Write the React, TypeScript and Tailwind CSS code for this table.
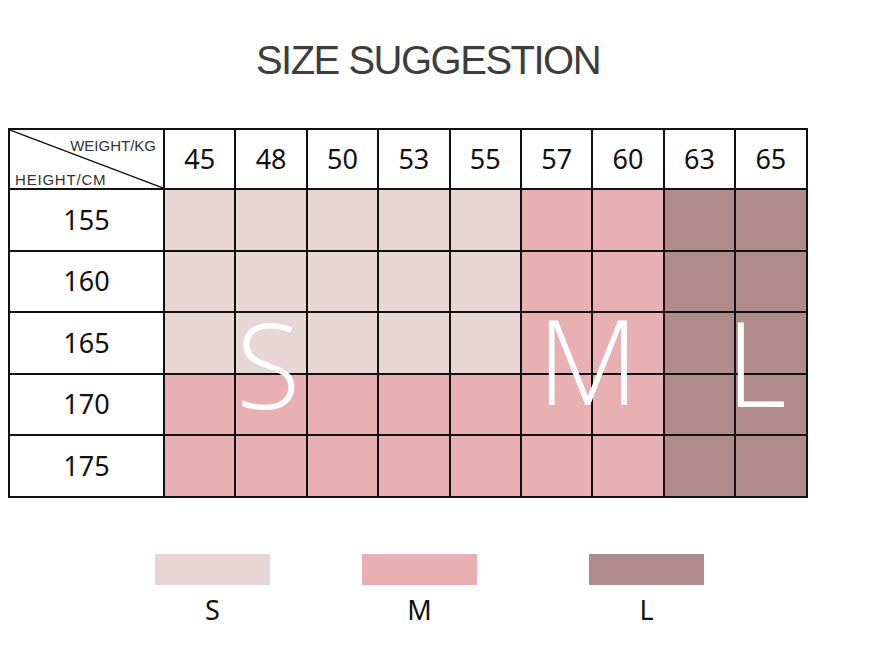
import React from "react";

const weights = ["45", "48", "50", "53", "55", "57", "60", "63", "65"];
const heights = ["155", "160", "165", "170", "175"];

const S = "bg-[#e8d5d6]";
const M = "bg-[#e8b0b3]";
const L = "bg-[#b08b8b]";

function cellColor(row: number, col: number): string {
  if (col >= 7) return L;
  if (col >= 5) return M;
  if (row <= 2) return S;
  return M;
}

export default function App() {
  return (
    <div className="w-[882px] h-[648px] bg-white relative overflow-hidden" style={{ fontFamily: '"Noto Sans", "Liberation Sans", sans-serif' }}>
      <div
        className="pt-[40px] pr-[26px] text-center text-[40px] leading-none tracking-[-1.5px] text-[#3d3d3d] h-[80px]"
        style={{ fontFamily: '"Liberation Sans", Arial, sans-serif' }}
      >
        SIZE SUGGESTION
      </div>

      <div className="relative ml-[8px] mt-[48px] w-[800px]">
        <div className="grid grid-cols-[155px_repeat(9,71.4px)] grid-rows-[60px_repeat(5,61.6px)] border-t-2 border-l-2 border-[#111]">
          <div className="relative border-r-2 border-b-2 border-[#111] bg-white">
            <svg className="absolute inset-0 w-full h-full" preserveAspectRatio="none" viewBox="0 0 100 100">
              <line x1="0" y1="0" x2="100" y2="100" stroke="#111" strokeWidth="1.3" vectorEffect="non-scaling-stroke" />
            </svg>
            <span
              className="absolute right-[7px] top-[8px] text-[15px] leading-none text-[#333]"
              style={{ fontFamily: '"Liberation Sans", Arial, sans-serif' }}
            >
              WEIGHT/KG
            </span>
            <span
              className="absolute left-[5px] bottom-[1px] text-[15px] leading-none tracking-[0.8px] text-[#333]"
              style={{ fontFamily: '"Liberation Sans", Arial, sans-serif' }}
            >
              HEIGHT/CM
            </span>
          </div>
          {weights.map((w) => (
            <div key={w} className="flex items-center justify-center border-r-2 border-b-2 border-[#111] bg-white text-[27px] text-[#111]">
              {w}
            </div>
          ))}
          {heights.map((h, r) => (
            <React.Fragment key={h}>
              <div className="flex items-center justify-center border-r-2 border-b-2 border-[#111] bg-white text-[27px] text-[#111]">
                {h}
              </div>
              {weights.map((w, c) => (
                <div key={w} className={`border-r-2 border-b-2 border-[#111] ${cellColor(r, c)}`} />
              ))}
            </React.Fragment>
          ))}
        </div>

        <span
          className="absolute left-[228px] top-[177px] text-[118px] leading-none font-light text-white"
          style={{ fontFamily: '"Open Sans", "Noto Sans", sans-serif' }}
        >
          S
        </span>
        <span
          className="absolute left-[529px] top-[173px] text-[118px] leading-none font-light text-white"
          style={{ fontFamily: '"Open Sans", "Noto Sans", sans-serif' }}
        >
          M
        </span>
        <span
          className="absolute left-[718px] top-[175px] text-[118px] leading-none font-light text-white"
          style={{ fontFamily: '"Open Sans", "Noto Sans", sans-serif' }}
        >
          L
        </span>
      </div>

      <div className="flex mt-[56px] ml-[155px]">
        <div className="flex flex-col items-center w-[115px]">
          <div className={`w-[115px] h-[31px] ${S}`} />
          <div className="mt-[11px] text-[27px] leading-none text-[#111]">S</div>
        </div>
        <div className="flex flex-col items-center w-[115px] ml-[92px]">
          <div className={`w-[115px] h-[31px] ${M}`} />
          <div className="mt-[11px] text-[27px] leading-none text-[#111]">M</div>
        </div>
        <div className="flex flex-col items-center w-[115px] ml-[112px]">
          <div className={`w-[115px] h-[31px] ${L}`} />
          <div className="mt-[11px] text-[27px] leading-none text-[#111]">L</div>
        </div>
      </div>
    </div>
  );
}
